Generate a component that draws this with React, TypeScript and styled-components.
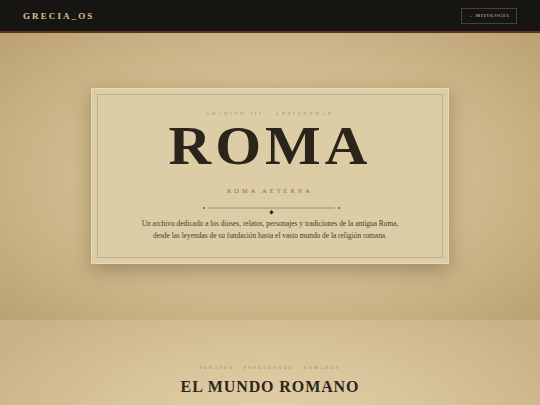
import { FC } from "react";
import styled, { createGlobalStyle } from "styled-components";

const GlobalStyle = createGlobalStyle`
  html, body {
    margin: 0;
    padding: 0;
    background: #d6c39a;
  }
  body {
    font-family: "Liberation Serif", "DejaVu Serif", serif;
  }
`

const Header = styled.header`
  height: 31px;
  background: #171511;
  border-bottom: 2px solid #5e3024;
  display: flex;
  align-items: center;
  justify-content: space-between;
  padding: 0 23px;
`

const Logo = styled.div`
  color: #d6c296;
  font-size: 9px;
  font-weight: bold;
  letter-spacing: 2.1px;
`

const NavButton = styled.div`
  width: 54px;
  height: 14px;
  border: 1px solid #4a4232;
  color: #a89a7c;
  font-size: 4.8px;
  font-weight: bold;
  letter-spacing: 0.5px;
  display: flex;
  align-items: center;
  justify-content: center;
`

const Hero = styled.section`
  height: 287px;
  display: flex;
  align-items: flex-start;
  justify-content: center;
  padding-top: 55px;
  box-sizing: border-box;
  background: radial-gradient(ellipse 70% 75% at 50% 50%, #dcc8a0 0%, #cfb98c 55%, #b9a071 100%);
`

const Card = styled.div`
  width: 358px;
  height: 176px;
  padding: 5px;
  box-sizing: border-box;
  background: #ddcda6;
  border: 1px solid #e6d9b8;
  box-shadow: 0 6px 18px rgba(70, 50, 20, 0.35);
`

const CardInner = styled.div`
  height: 100%;
  border: 1px solid #c2ae86;
  box-sizing: border-box;
  display: flex;
  flex-direction: column;
  align-items: center;
  padding-top: 16px;
`

const Kicker = styled.div<{ $color?: string; $size?: number; $spacing?: number }>`
  color: ${p => p.$color || "#a58a6a"};
  font-size: ${p => p.$size || 4.6}px;
  letter-spacing: ${p => p.$spacing ?? 2}px;
  text-transform: uppercase;
`

const Title = styled.h1`
  margin: 3px 0 0;
  font-size: 59px;
  line-height: 54px;
  font-weight: bold;
  color: #2a241b;
  letter-spacing: 4px;
  transform: scaleY(0.92);
`

const Subtitle = styled(Kicker)`
  margin-top: 14px;
`

const Divider = styled.div`
  margin-top: 8px;
  margin-left: 3px;
  width: 137px;
  height: 10px;
`

const Paragraph = styled.p`
  margin: 6px 0 0;
  font-size: 7.4px;
  line-height: 12px;
  color: #463c2c;
  text-align: center;
`

const World = styled.section`
  height: 120px;
  display: flex;
  flex-direction: column;
  align-items: center;
  padding-top: 45px;
  box-sizing: border-box;
  background: radial-gradient(ellipse 60% 140% at 50% 100%, #e4d2aa 0%, #d9c59c 50%, #c9b285 100%);
`

const SectionTitle = styled.h2`
  margin: 9px 0 0;
  font-size: 16px;
  line-height: 16px;
  font-weight: bold;
  color: #2c261c;
  letter-spacing: 0.9px;
`

const App: FC = () => {
  return (
    <>
      <GlobalStyle />
      <Header>
        <Logo>GRECIA_OS</Logo>
        <NavButton>← MITOLOGÍA</NavButton>
      </Header>
      <Hero>
        <Card>
          <CardInner>
            <Kicker $spacing={2.8}>Archivo III · Antigüedad</Kicker>
            <Title>ROMA</Title>
            <Subtitle $color="#8c6a58" $size={6.4} $spacing={3}>Roma Aeterna</Subtitle>
            <Divider>
              <svg width="137" height="10" viewBox="0 0 137 10">
                <circle cx="1" cy="2" r="0.9" fill="#7a4a3a" />
                <line x1="5" y1="2" x2="132" y2="2" stroke="#8f7b58" strokeWidth="0.8" />
                <circle cx="136" cy="2" r="0.9" fill="#7a4a3a" />
                <path d="M68.5 4 L70.7 6.2 L68.5 8.4 L66.3 6.2 Z" fill="#2e261c" />
              </svg>
            </Divider>
            <Paragraph>
              Un archivo dedicado a los dioses, relatos, personajes y tradiciones de la antigua Roma,
              <br />
              desde las leyendas de su fundación hasta el vasto mundo de la religión romana.
            </Paragraph>
          </CardInner>
        </Card>
      </Hero>
      <World>
        <Kicker $color="#a08a68" $size={4.8} $spacing={1.9}>Senatus · Populusque · Romanus</Kicker>
        <SectionTitle>EL MUNDO ROMANO</SectionTitle>
      </World>
    </>
  );
};

export default App;
